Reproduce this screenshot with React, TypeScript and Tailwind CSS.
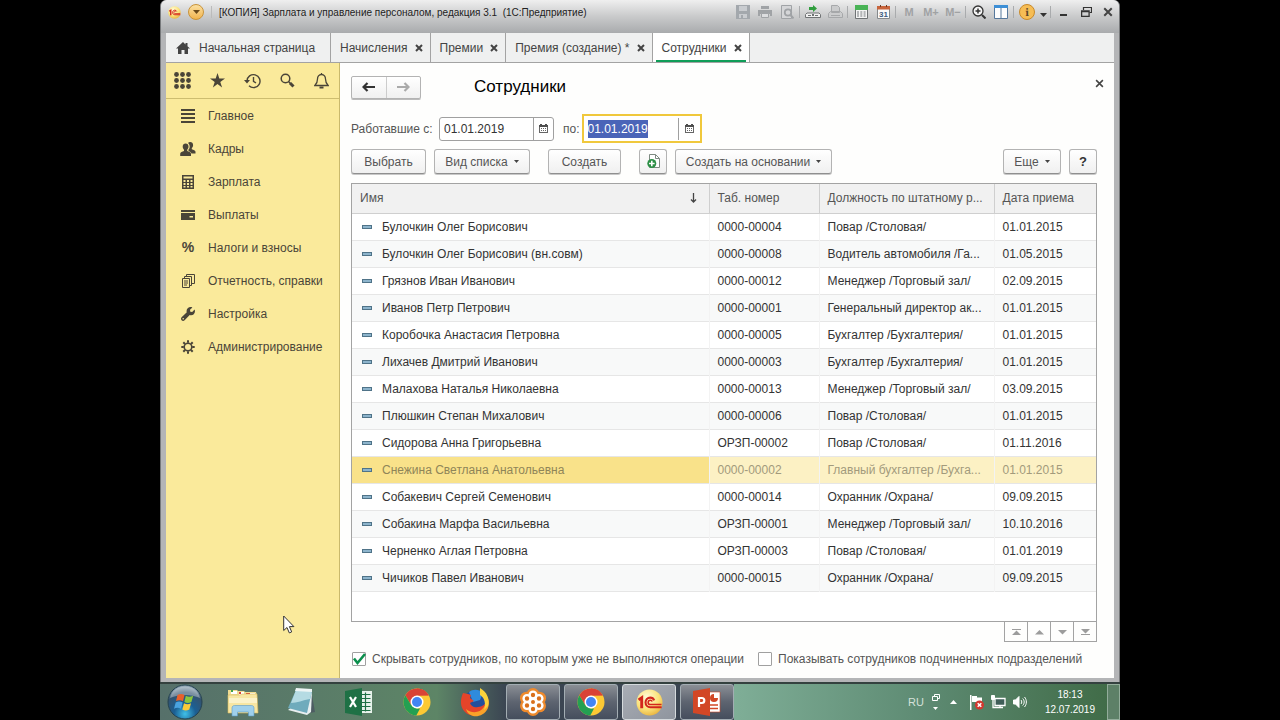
import { useEffect, useRef, useState, type ReactNode } from 'react'

const tabs = [
  { title: 'Начисления' },
  { title: 'Премии' },
  { title: 'Премия (создание) *' },
  { title: 'Сотрудники', active: true },
]

const employees = [
  ['Булочкин Олег Борисович', '0000-00004', 'Повар /Столовая/', '01.01.2015'],
  ['Булочкин Олег Борисович (вн.совм)', '0000-00008', 'Водитель автомобиля /Га...', '01.05.2015'],
  ['Грязнов Иван Иванович', '0000-00012', 'Менеджер /Торговый зал/', '02.09.2015'],
  ['Иванов Петр Петрович', '0000-00001', 'Генеральный директор ак...', '01.01.2015'],
  ['Коробочка Анастасия Петровна', '0000-00005', 'Бухгалтер /Бухгалтерия/', '01.01.2015'],
  ['Лихачев Дмитрий Иванович', '0000-00003', 'Бухгалтер /Бухгалтерия/', '01.01.2015'],
  ['Малахова Наталья Николаевна', '0000-00013', 'Менеджер /Торговый зал/', '03.09.2015'],
  ['Плюшкин Степан Михалович', '0000-00006', 'Повар /Столовая/', '01.01.2015'],
  ['Сидорова Анна Григорьевна', 'ОРЗП-00002', 'Повар /Столовая/', '01.11.2016'],
  ['Снежина Светлана Анатольевна', '0000-00002', 'Главный бухгалтер /Бухга...', '01.01.2015'],
  ['Собакевич Сергей Семенович', '0000-00014', 'Охранник /Охрана/', '09.09.2015'],
  ['Собакина Марфа Васильевна', 'ОРЗП-00001', 'Менеджер /Торговый зал/', '10.10.2016'],
  ['Черненко Аглая Петровна', 'ОРЗП-00003', 'Повар /Столовая/', '01.01.2019'],
  ['Чичиков Павел Иванович', '0000-00015', 'Охранник /Охрана/', '09.09.2015'],
]

/* ---------- Icons ---------- */

const MenuIcon = () => (
  <svg width="14" height="14" viewBox="0 0 14 14" fill="#4a4538">
    <path d="M0 0h14v2H0zM0 4h14v2H0zM0 8h14v2H0zM0 12h14v2H0z" />
  </svg>
)

const PeopleIcon = () => (
  <svg width="16" height="14" viewBox="0 0 16 14" fill="#4a4538">
    <path d="M10.200 0c1.700 0 2.900 1.200 2.900 3 0 1.300-.5 2.400-1.300 3v1.200c1.700.6 3.700 1.100 3.700 2.600v1.700h-4c-.4-1.400-1.600-2-3-2.600V7.600c.8-.8 1.200-2 1.200-3.200 0-1.400-.6-2.700-1.700-3.500C8.500.3 9.300 0 10.200 0z" />
    <path d="M5.600 1.600c1.800 0 2.900 1.200 2.900 3 0 1.400-.5 2.500-1.300 3.200V9c1.700.7 3.800 1.200 3.800 2.800V14H.2v-2.200C.2 10.200 2.300 9.700 4 9V7.800c-.8-.7-1.300-1.800-1.300-3.200 0-1.800 1.200-3 2.900-3z" />
  </svg>
)

const CalculatorIcon = () => (
  <svg width="12" height="14" viewBox="0 0 12 14">
    <path fill="#4a4538" fillRule="evenodd" d="M0 0h12v14H0zM1.500 1.500v2h9v-2zM1.500 5v2h2V5zM5 5v2h2V5zM8.500 5v2h2V5zM1.500 8v2h2V8zM5 8v2h2V8zM8.500 8v2h2V8zM1.500 11v1.500h2V11zM5 11v1.500h2V11zM8.500 11v1.500h2V11z" />
  </svg>
)

const CardIcon = () => (
  <svg width="14" height="10" viewBox="0 0 14 10" fill="#4a4538">
    <path d="M0 0h14v2H0z" />
    <path fillRule="evenodd" d="M0 3h14v7H0zM8.500 6v1.500H12V6z" />
  </svg>
)

const ReportIcon = () => (
  <svg width="13" height="14" viewBox="0 0 13 14" fill="none" stroke="#4a4538">
    <path d="M.5 4.500h7v9h-7zM2.500 4V2.500h7v9H8M4.500 2V.5h8v9H10" />
    <path d="M2 7h4M2 9h4M2 11h3" />
  </svg>
)

const WrenchIcon = () => (
  <svg width="14" height="14" viewBox="0 0 14 14" fill="#4a4538">
    <path d="M13.600 2.600 11.200 5 9.300 4.700 9 2.800 11.400.4C9.800-.3 8-.1 6.700 1.200 5.600 2.300 5.300 3.900 5.800 5.300L.6 10.300c-.8.8-.8 2.200 0 3s2.200.8 3 0l5.100-5.200c1.400.5 3 .2 4.100-.9 1.200-1.200 1.500-3 .8-4.600zM2.200 12.600a.8.8 0 1 1 0-1.600.8.8 0 0 1 0 1.600z" />
  </svg>
)

const GearIcon = () => (
  <svg width="14" height="14" viewBox="0 0 14 14" fill="none" stroke="#4a4538">
    <circle cx="7" cy="7" r="3.800" strokeWidth="1.600" />
    <path strokeWidth="2" d="M7 .3v2.500M7 11.200v2.500M.3 7h2.500M11.200 7h2.500M2.300 2.300l1.700 1.700M10 10l1.700 1.700M2.300 11.700 4 10M10 4l1.700-1.700" />
  </svg>
)

const sections: { title: string; icon: ReactNode }[] = [
  { title: 'Главное', icon: <MenuIcon /> },
  { title: 'Кадры', icon: <PeopleIcon /> },
  { title: 'Зарплата', icon: <CalculatorIcon /> },
  { title: 'Выплаты', icon: <CardIcon /> },
  { title: 'Налоги и взносы', icon: <span className="text-[14px] font-bold text-[#4a4538]">%</span> },
  { title: 'Отчетность, справки', icon: <ReportIcon /> },
  { title: 'Настройка', icon: <WrenchIcon /> },
  { title: 'Администрирование', icon: <GearIcon /> },
]

const CloseIcon = ({ size = 8, width = 2 }: { size?: number; width?: number }) => (
  <svg width={size} height={size} viewBox="0 0 8 8" stroke="#444" strokeWidth={width}>
    <path d="M1 1l6 6M7 1 1 7" />
  </svg>
)

const DateIcon = () => (
  <svg width="9" height="9" viewBox="0 0 9 9" shapeRendering="crispEdges">
    <path fill="#4f4f4f" d="M1 0h2v1h3V0h2v1h1v2H0V1h1z" />
    <path fill="none" stroke="#666" d="M.5 3v5.500h8V3" />
    <path fill="#666" d="M2 4h1v1H2zM4 4h1v1H4zM6 4h1v1H6zM2 6h1v1H2zM4 6h1v1H4zM6 6h1v1H6z" />
  </svg>
)

const Caret = () => (
  <svg width="5" height="3" viewBox="0 0 5 3" fill="#444">
    <path d="M0 0h5L2.500 3z" />
  </svg>
)

const Arrow = ({ color, flip }: { color: string; flip?: boolean }) => (
  <svg width="14" height="10" viewBox="0 0 14 10" className={flip ? 'rotate-180' : ''} fill="none" stroke={color} strokeWidth="2.200">
    <path d="M1.500 5H13M5.500 1l-4 4 4 4" />
  </svg>
)

const OneCIcon = ({ size }: { size: number }) => (
  <svg width={size} height={size} viewBox="0 0 26 26">
    <defs>
      <radialGradient id="oneC" cx=".4" cy=".3" r=".75">
        <stop offset="0" stopColor="#fffbd8" />
        <stop offset=".6" stopColor="#fbe27a" />
        <stop offset="1" stopColor="#e9b23c" />
      </radialGradient>
    </defs>
    <circle cx="13" cy="13" r="12.500" fill="url(#oneC)" />
    <g fill="none" stroke="#d3251c">
      <path strokeWidth="2.800" d="M2.500 10.500 5.500 8.500V18.500" />
      <path strokeWidth="2" d="M17.500 11c-.6-1.700-2-2.700-3.800-2.700-2.600 0-4.500 2-4.500 4.700 0 2.600 2 4.500 4.500 4.500h11" />
      <path strokeWidth="1.500" d="M15.600 12c-.3-.8-1-1.200-1.900-1.200-1.200 0-2 .9-2 2.200s.9 2 2.100 2h10.800" />
    </g>
  </svg>
)

const ChromeIcon = () => (
  <svg width="28" height="28" viewBox="0 0 28 28">
    <circle cx="14" cy="14" r="13.500" fill="#fcc934" />
    <path fill="#d94336" d="M2.300 7.200A13.500 13.500 0 0 1 25.700 7.300L14 7.500 8.300 17.300z" />
    <path fill="#24a052" d="M2.300 7.200 8.300 17.300 14 20.500h3L13.300 27.500A13.500 13.500 0 0 1 2.300 7.200z" />
    <path fill="#d94336" d="M14 7.500h11.800A13.500 13.500 0 0 0 14 .5z" />
    <circle cx="14" cy="14" r="6.500" fill="#fff" />
    <circle cx="14" cy="14" r="5" fill="#4285f4" />
  </svg>
)

const StartOrb = () => (
  <svg width="36" height="36" viewBox="0 0 36 36">
    <defs>
      <radialGradient id="orb" cx=".5" cy=".85" r=".9">
        <stop offset="0" stopColor="#3fc0e8" />
        <stop offset=".35" stopColor="#1b5f93" />
        <stop offset=".7" stopColor="#34536e" />
        <stop offset="1" stopColor="#b7cad4" />
      </radialGradient>
    </defs>
    <circle cx="18" cy="18" r="17" fill="url(#orb)" stroke="#24414f" />
    <path d="M3 14C5 6 11 2.500 18 2.500S31 6 33 14c-9-4-21-4-30 0z" fill="#fff" opacity=".35" />
    <path fill="#e8602c" d="M10.500 11c2.500-1.400 4.700-1.300 7 .1L16 17.300c-2.200-1.400-4.500-1.400-7-.2z" />
    <path fill="#8cc63e" d="M18.800 11.800c2.400 1.300 4.700 1.300 7.400 0l-1.800 6.200c-2.500 1.200-4.800 1.200-7 0z" />
    <path fill="#4aa3e0" d="M8.700 18.400c2.500-1.200 4.700-1.100 7 .2L14 24.800c-2.200-1.300-4.500-1.300-7-.1z" />
    <path fill="#fbcb3a" d="M17 19.300c2.300 1.300 4.600 1.300 7 0l-1.700 6.200c-2.500 1.300-4.700 1.200-7 0z" />
  </svg>
)

const ExplorerIcon = () => (
  <svg width="32" height="30" viewBox="0 0 32 30">
    <path fill="#f0dc93" d="M1 8V3h9l1 1h6l1 1h11l1 3z" />
    <path fill="#fff" d="M4 4h6v3H4zM12 5h5v3h-5zM19 6h9v2h-9z" />
    <path fill="#3fa24a" d="M4 3h2v2H4z" />
    <path fill="#d94336" d="M12 5h2v2h-2zM19 6h4v1h-4z" />
    <path fill="#f7e6a2" stroke="#d8b85a" strokeWidth=".6" d="M1 8h12l2-1h15l1 19H1z" />
    <path fill="#fbf2c9" d="M2 11h28v5H2z" />
    <path fill="#9fd0ec" stroke="#5a9bc8" strokeWidth=".6" d="M5 29v-8c0-1.500 1-2.500 2.500-2.500h17c1.500 0 2.500 1 2.500 2.500v8h-5.500v-4h-11v4z" />
  </svg>
)

const NotepadIcon = () => (
  <svg width="28" height="28" viewBox="0 0 28 28">
    <path fill="#4d5c62" d="M24 2l4 22-5 1z" />
    <path fill="#e8eff0" d="M1 22 20 27l4-3 1-20z" />
    <path fill="#6fabbc" d="M9 2 25 3 20 25 1 20z" />
    <path fill="#b5dbe3" d="M9 2 25 3 23 11C16 12 10 15 4 15z" />
    <path fill="#eef5f5" d="M9 0 25 1v3L8 3z" />
  </svg>
)

const ExcelIcon = () => (
  <svg width="28" height="28" viewBox="0 0 28 28">
    <path fill="#e8f3ec" d="M15 3h12v22H15z" />
    <path stroke="#1e7145" strokeWidth="1.200" d="M16 6.500h9.500M16 10.500h9.500M16 14.500h9.500M16 18.500h9.500M16 22.500h9.500M20.500 4.500v19" />
    <path fill="#1e7145" d="M0 3 17 0v28L0 25z" />
    <path fill="none" stroke="#fff" strokeWidth="2.200" d="M5 9l6 10M11 9 5 19" />
  </svg>
)

const FirefoxIcon = () => (
  <svg width="30" height="30" viewBox="0 0 30 30">
    <circle cx="15" cy="15.500" r="12" fill="#234f9c" />
    <path fill="#2f8bdc" d="M9 5c4-3 10-3 14 1l-3 7-7 2z" />
    <path fill="#e5442a" d="M3 6c-3 7-3 14 2 19 5 5 14 5 19 0 3-3 5-8 4-13-2 5-6 8-10 8-4 1-7-1-8-4l4-2-4-3 1-3-3-1z" />
    <path fill="#f9a229" d="M6 22c6 5 14 4 18-2 3-4 3-10 0-14 5 4 6 10 4 15-3 7-10 9-15 8-3-1-6-3-7-7z" />
    <path fill="#fbd23b" d="M20 1c7 4 10 11 8 18l-4 4c2-6 1-12-4-15z" />
  </svg>
)

const FlowerIcon = () => (
  <svg width="30" height="28" viewBox="0 0 30 28">
    <g fill="#ef8a2c">
      <circle cx="15" cy="14" r="11" />
      <circle cx="15" cy="6.500" r="6.500" />
      <circle cx="21.500" cy="10.200" r="6.500" />
      <circle cx="21.500" cy="17.800" r="6.500" />
      <circle cx="15" cy="21.500" r="6.500" />
      <circle cx="8.500" cy="17.800" r="6.500" />
      <circle cx="8.500" cy="10.200" r="6.500" />
    </g>
    <g fill="#d9701c" stroke="#fff" strokeWidth="2.400">
      <circle cx="15" cy="7" r="3.400" />
      <circle cx="21" cy="10.500" r="3.400" />
      <circle cx="21" cy="17.500" r="3.400" />
      <circle cx="15" cy="21" r="3.400" />
      <circle cx="9" cy="17.500" r="3.400" />
      <circle cx="9" cy="10.500" r="3.400" />
      <circle cx="15" cy="14" r="3.200" />
    </g>
  </svg>
)

const PowerPointIcon = () => (
  <svg width="28" height="28" viewBox="0 0 28 28">
    <path fill="#fff" stroke="#d24726" strokeWidth=".6" d="M15 4h12v20H15z" />
    <circle cx="21" cy="10" r="4" fill="#d24726" />
    <path fill="#fff" d="M21 10V6h4v4z" />
    <path stroke="#d24726" strokeWidth="1.500" d="M17 17h8M17 20.500h8" />
    <path fill="#d24726" d="M0 3 17 0v28L0 25z" />
    <path fill="none" stroke="#fff" strokeWidth="2.200" d="M6 19v-9h2.800a2.500 2.500 0 0 1 0 5H6" />
  </svg>
)

/* ---------- Window title bar ---------- */

const toolButton = 'flex h-4 w-[22px] items-center justify-center'
const Divider = () => <span className="mx-px h-3 w-0.5 border-l border-[#a9abad]" />

function TitleBar() {
  return (
    <header className="flex h-[33px] items-start justify-between rounded-t-md bg-linear-to-b from-[#efefef] via-[#c9cacb] via-50% to-[#a9abad] pt-1">
      <div className="flex h-4 items-center pl-[7px]">
        <OneCIcon size={13} />
        <button aria-label="Меню программы" className="ml-[7px] flex size-4 items-center justify-center rounded-full border border-[#c99339] bg-linear-to-b from-[#fbe0a0] to-[#f1b44c]">
          <svg width="7" height="4" viewBox="0 0 7 4" fill="#6b4a1a"><path d="M0 0h7L3.500 4z" /></svg>
        </button>
        <span className="mx-[7px] h-3 w-px bg-[#bbb]" />
        <h1 className="text-[10px] whitespace-nowrap text-[#222]">
          [КОПИЯ] Зарплата и управление персоналом, редакция 3.1&nbsp; (1С:Предприятие)
        </h1>
      </div>

      <div className="flex h-4 items-center">
        <button aria-label="Сохранить" className={toolButton}>
          <svg width="14" height="14" viewBox="0 0 14 14"><path fill="#a3a8ad" d="M0 0h14v14H0z" /><path fill="#c9ccd0" d="M3 1h8v5H3zM3 9h8v4H3z" /><path fill="#a3a8ad" d="M5 10h2v3H5z" /></svg>
        </button>
        <button aria-label="Печать" className={toolButton}>
          <svg width="14" height="14" viewBox="0 0 14 14"><path fill="#a0a3a6" d="M3 1h8v3H3zM0 5h14v6h-2V9H2v2H0z" /><path fill="#dcdddf" stroke="#a0a3a6" d="M3.500 8.500h7v4h-7z" /></svg>
        </button>
        <button aria-label="Предварительный просмотр" className={toolButton}>
          <svg width="14" height="14" viewBox="0 0 14 14" fill="none" stroke="#a0a3a6"><path fill="#d5d6d8" d="M1.500.5h10v13h-10z" /><circle cx="8" cy="7.500" r="3.200" strokeWidth="1.800" /><path strokeWidth="2" d="M10.500 10l3 3.500" /></svg>
        </button>
        <Divider />
        <button aria-label="Получить ссылку" className={toolButton}>
          <svg width="16" height="14" viewBox="0 0 16 14"><path fill="#2f9e3d" d="M4 2h4V0l4 3.500L8 7V5H4z" /><path fill="#f1f1f1" stroke="#707375" d="M.5 12.500V9.500L2 8h12l1.500 1.500v3z" /><path stroke="#707375" d="M3 10.500h3M10 10.500h3M7.500 9v2M8.500 9v2" /></svg>
        </button>
        <button aria-label="Перейти по ссылке" className={toolButton}>
          <svg width="15" height="14" viewBox="0 0 15 14"><path fill="#cbcccd" stroke="#a6a8aa" d="M3.500.5h6l2 2v5h-8zM.5 8.500l2-2h10l2 2v4H.5zM3 10.500h9" /></svg>
        </button>
        <Divider />
        <button aria-label="Калькулятор" className={toolButton}>
          <svg width="13" height="14" viewBox="0 0 13 14"><path fill="#f4f4f4" stroke="#6f7375" d="M.5.5h12v13H.5z" /><path fill="#49b356" d="M0 0h13v5H0z" /><path stroke="#75797c" strokeDasharray="2 1.300" d="M2 7h9M2 9h9M2 11h9" strokeWidth="1.200" /></svg>
        </button>
        <button aria-label="Календарь" className={toolButton}>
          <svg width="13" height="14" viewBox="0 0 13 14"><path fill="#fafafa" stroke="#85898c" d="M.5 1.500h12v12H.5z" /><path fill="#c8643c" d="M0 1h13v3.500H0z" /><path fill="#6b3a22" d="M3 0h1v2H3zM9 0h1v2H9z" /><text x="6.500" y="12" fontSize="8" fontWeight="700" textAnchor="middle" fill="#3d5c80">31</text></svg>
        </button>
        <Divider />
        <button className={`${toolButton} text-[11px] font-bold text-[#a0a2a4]`}>M</button>
        <button className={`${toolButton} text-[11px] font-bold text-[#a0a2a4]`}>M+</button>
        <button className={`${toolButton} text-[11px] font-bold text-[#a0a2a4]`}>M−</button>
        <Divider />
        <button aria-label="Масштаб" className={toolButton}>
          <svg width="14" height="14" viewBox="0 0 14 14" fill="none" stroke="#333"><circle cx="6" cy="6" r="5" fill="#f5f5f5" strokeWidth="1.300" /><path strokeWidth="1.500" d="M3.500 6h5M6 3.500v5" /><path strokeWidth="2" d="M10 10l3.500 3.500" /></svg>
        </button>
        <button aria-label="Панели" className={toolButton}>
          <svg width="14" height="14" viewBox="0 0 14 14"><path fill="#fdfdfd" stroke="#56789c" d="M.5.5h13v13H.5z" /><path fill="#3d8fd6" d="M0 0h14v3H0z" /><path stroke="#56789c" d="M7 3v11" /></svg>
        </button>
        <Divider />
        <button aria-label="О программе" className={toolButton}>
          <span className="flex size-4 items-center justify-center rounded-full border border-[#c98a2a] bg-[#f6bd55] font-serif text-[12px] leading-none font-bold text-[#5c4a2a]">i</span>
        </button>
        <svg width="7" height="4" viewBox="0 0 7 4" fill="#333" className="mx-0.5 mt-1.5"><path d="M0 0h7L3.500 4z" /></svg>
        <Divider />
        <button aria-label="Свернуть" className={toolButton}>
          <svg width="8" height="10" viewBox="0 0 8 10"><path fill="#333" d="M0 7h7v2H0z" /></svg>
        </button>
        <button aria-label="Развернуть" className={toolButton}>
          <svg width="11" height="10" viewBox="0 0 11 10" fill="none" stroke="#333"><path d="M2.500 3V.5h8v5H8.500" strokeWidth="1.200" /><path d="M.6 3.800h7.500v5.500H.6zM.6 4.500h7.500" strokeWidth="1.300" /></svg>
        </button>
        <button aria-label="Закрыть" className={toolButton}><CloseIcon size={10} width={1.6} /></button>
      </div>
    </header>
  )
}

function TabBar() {
  return (
    <nav className="flex h-[30px] border-b border-[#a3a3a3] bg-[#eff0f0] text-[12px] text-[#444]">
      <a href="#home" className="flex w-[165px] items-center border-r border-[#a3a3a3] pl-2.5">
        <svg width="14" height="12" viewBox="0 0 14 12" fill="#444"><path d="M7 0 0 6.500h2V12h3.500V8h3v4H12V6.500h2L11.500 4.200V1h-2v1.400z" /></svg>
        <span className="ml-[9px]">Начальная страница</span>
      </a>
      {tabs.map((tab) => (
        <div
          key={tab.title}
          className={`flex items-center border-r border-[#a3a3a3] px-[3px] ${tab.active ? 'bg-white' : ''}`}
        >
          <div className={`flex h-full items-center gap-[7px] pr-1 pl-1.5 ${tab.active ? 'border-b-2 border-[#0f9d58] pt-0.5' : ''}`}>
            <a href="#tab" className="whitespace-nowrap">{tab.title}</a>
            <button aria-label={`Закрыть ${tab.title}`}><CloseIcon /></button>
          </div>
        </div>
      ))}
    </nav>
  )
}

/* ---------- Left section panel ---------- */

function Sidebar() {
  return (
    <aside className="relative w-[174px] shrink-0 border-r border-[#c9b96c] bg-[#faea9b]">
      <div className="flex h-9 items-center justify-between border-b border-[#cdbd70] pr-2.5 pl-2">
        <button aria-label="Функции">
          <svg width="17" height="17" viewBox="0 0 17 17" fill="#4a4538">
            {[2.5, 8.5, 14.5].map((y) => [2.5, 8.5, 14.5].map((x) => <circle key={`${x}-${y}`} cx={x} cy={y} r="2.400" />))}
          </svg>
        </button>
        <button aria-label="Избранное">
          <svg width="15" height="15" viewBox="0 0 15 15" fill="#4a4538"><path d="M7.500 0 9.300 5.500H15l-4.700 3.400 1.800 5.600-4.600-3.500-4.600 3.500 1.800-5.600L0 5.500h5.700z" /></svg>
        </button>
        <button aria-label="История">
          <svg width="17" height="16" viewBox="0 0 17 16" fill="none" stroke="#4a4538" strokeWidth="1.400">
            <path d="M3 8a6.500 6.500 0 1 1 2 4.800M9.500 4v4.300l2.500 1.700" /><path fill="#4a4538" stroke="none" d="M0 7h6L3 10.500z" />
          </svg>
        </button>
        <button aria-label="Поиск">
          <svg width="15" height="15" viewBox="0 0 15 15" fill="none" stroke="#4a4538"><circle cx="5.500" cy="5.500" r="4.300" strokeWidth="1.500" /><path d="M8.500 8.500l2 2" strokeWidth="1.500" /><path d="M10 10l3.500 3.500" strokeWidth="3" /></svg>
        </button>
        <button aria-label="Оповещения">
          <svg width="15" height="16" viewBox="0 0 15 16" fill="none" stroke="#4a4538" strokeWidth="1.300"><path d="M7.500 1.500c-2.700 0-4 2-4 4.500 0 4-1.200 5-2.700 6.500h13.400C12.700 11 11.500 10 11.500 6c0-2.500-1.300-4.500-4-4.500zM7.500 0v2" /><path d="M5.500 14.500h4" strokeWidth="2" /></svg>
        </button>
      </div>
      <ul className="text-[12px] text-[#4a4538]">
        {sections.map((section) => (
          <li key={section.title}>
            <a href="#section" className="flex h-[33px] items-center pl-3.5">
              <span className="flex w-4 justify-center">{section.icon}</span>
              <span className="ml-3 whitespace-nowrap">{section.title}</span>
            </a>
          </li>
        ))}
      </ul>
      <svg width="12" height="19" viewBox="0 0 12 19" className="absolute bottom-11 left-[117px]">
        <path fill="#fff" stroke="#333" d="M.7 1v14.500l3.300-3 2.300 5.400 2.400-1-2.300-5.300h4.500z" />
      </svg>
    </aside>
  )
}

/* ---------- Employee list form ---------- */

const buttonClass =
  'flex h-[25px] items-center justify-center rounded-[3px] border border-[#b3b3b3] border-b-[#8f8f8f] bg-linear-to-b from-white to-[#f0f0f0] whitespace-nowrap shadow-[0_1px_0_#c8c8c8]'

function FormHeader() {
  return (
    <div className="flex items-center pt-3">
      <div className="flex h-[23px] w-[70px] rounded-[2px] border border-[#b3b3b3] bg-linear-to-b from-white to-[#f0f0f0] shadow-[0_1px_0_#bbb]">
        <button aria-label="Назад" className="flex flex-1 items-center justify-center border-r border-[#ccc]"><Arrow color="#333" /></button>
        <button aria-label="Вперед" className="flex flex-1 items-center justify-center"><Arrow color="#aaa" flip /></button>
      </div>
      <h2 className="ml-[53px] text-[17px] leading-6 text-black">Сотрудники</h2>
      <button aria-label="Закрыть форму" className="-mr-[7px] mb-2 ml-auto"><CloseIcon size={9} width={1.4} /></button>
    </div>
  )
}

function Filters() {
  const toRef = useRef<HTMLInputElement>(null)

  useEffect(() => {
    toRef.current?.focus()
    toRef.current?.select()
  }, [])

  return (
    <div className="mt-[15px] flex h-[29px] items-center">
      <label htmlFor="from" className="w-[88px] whitespace-nowrap">Работавшие с:</label>
      <div className="flex h-6 w-[115px] rounded-[3px] border border-[#a0a0a0] bg-white">
        <input id="from" defaultValue="01.01.2019" className="min-w-0 flex-1 pl-1 text-[#333] outline-none" />
        <button aria-label="Выбрать дату начала" className="flex w-5 items-center justify-center border-l border-[#a0a0a0]"><DateIcon /></button>
      </div>
      <label htmlFor="to" className="mr-0.5 ml-[9px]">по:</label>
      <div className="flex h-[29px] w-[120px] items-center border-2 border-[#f0c83c] bg-white">
        <input
          id="to"
          ref={toRef}
          defaultValue="01.01.2019"
          className="min-w-0 flex-1 pl-1 text-[#333] outline-none selection:bg-[#4a64b8] selection:text-white"
        />
        <button aria-label="Выбрать дату окончания" className="flex h-[22px] w-[22px] items-center justify-center border-l border-[#a0a0a0]"><DateIcon /></button>
      </div>
    </div>
  )
}

function CommandBar() {
  return (
    <div className="mt-1.5 flex items-center">
      <button className={`${buttonClass} w-[75px]`}>Выбрать</button>
      <button className={`${buttonClass} ml-2 w-24 gap-1.5`}>Вид списка <Caret /></button>
      <button className={`${buttonClass} ml-[18px] w-[73px]`}>Создать</button>
      <button aria-label="Создать копированием" className={`${buttonClass} ml-[18px] w-7`}>
        <svg width="13" height="15" viewBox="0 0 13 15"><path fill="#fff" stroke="#7e8a82" d="M2.500.5h6l4 4v9h-10z" /><path fill="none" stroke="#7e8a82" d="M8.500.5v4h4" /><circle cx="4.800" cy="9.500" r="4.500" fill="#2b8f45" /><path stroke="#fff" strokeWidth="1.600" d="M2 9.500h5.600M4.800 6.700v5.600" /></svg>
      </button>
      <button className={`${buttonClass} ml-2 w-[157px] gap-1.5`}>Создать на основании <Caret /></button>
      <button className={`${buttonClass} ml-auto w-[58px] gap-1.5`}>Еще <Caret /></button>
      <button aria-label="Справка" className={`${buttonClass} ml-2 w-7 text-[13px] font-bold text-[#333]`}>?</button>
    </div>
  )
}

function EmployeeTable() {
  const [selected, setSelected] = useState(9)

  return (
    <div className="mt-[9px] flex flex-1 flex-col border border-[#a3a3a3] bg-white">
      <table className="w-full table-fixed border-collapse text-left">
        <thead className="bg-[#f1f1f1] text-[#555]">
          <tr className="h-[29px] border-b border-[#cfcfcf]">
            <th className="pl-2 font-normal">
              <div className="flex items-center justify-between pr-3">
                Имя
                <svg width="7" height="10" viewBox="0 0 7 10" fill="none" stroke="#444" strokeWidth="1.300"><path d="M3.500 0v9M1 6.500 3.500 9 6 6.500" /></svg>
              </div>
            </th>
            <th className="w-[110px] border-l border-[#cfcfcf] pl-2 font-normal">Таб. номер</th>
            <th className="w-[175px] border-l border-[#cfcfcf] pl-2 font-normal whitespace-nowrap">Должность по штатному р...</th>
            <th className="w-[102px] border-l border-[#cfcfcf] pl-2 font-normal">Дата приема</th>
          </tr>
        </thead>
        <tbody>
          {employees.map(([name, number, position, date], index) => {
            const active = index === selected
            return (
              <tr
                key={number}
                onClick={() => setSelected(index)}
                className={`h-[27px] border-b border-[#e6e6e6] ${active ? 'bg-[#fcf1c4] text-[#a29a7c]' : 'text-[#333] even:bg-[#f8f9f9]'}`}
              >
                <td className={`pl-2.5 ${active ? 'bg-[#f9e28a] text-[#8f8558]' : ''}`}>
                  <div className="flex items-center gap-2.5 whitespace-nowrap">
                    <span className="h-1 w-2.5 border border-[#4f7388] bg-[#8db4cc]" />
                    {name}
                  </div>
                </td>
                <td className="border-l border-[#f3f3f3] pl-2">{number}</td>
                <td className="border-l border-[#f3f3f3] pl-2 whitespace-nowrap">{position}</td>
                <td className="border-l border-[#f3f3f3] pl-2">{date}</td>
              </tr>
            )
          })}
        </tbody>
      </table>
    </div>
  )
}

const pagerIcons = [
  { label: 'В начало', path: 'M0 0h9v1H0zM4.500 1.500 9 6H0z' },
  { label: 'Вверх', path: 'M4.500 1 9 5.500H0z' },
  { label: 'Вниз', path: 'M0 1h9L4.500 5.500z' },
  { label: 'В конец', path: 'M0 0h9L4.500 4.500zM0 5h9v1H0z' },
]

function CheckBox({ label, checked }: { label: string; checked?: boolean }) {
  return (
    <label className="flex items-center gap-1.5 whitespace-nowrap">
      <span className="grid size-[15px] place-items-center">
        <input type="checkbox" defaultChecked={checked} className="peer col-start-1 row-start-1 size-3.5 appearance-none rounded-[1px] border border-[#a0a0a0] bg-white" />
        <svg width="14" height="13" viewBox="0 0 14 13" className="pointer-events-none invisible col-start-1 row-start-1 peer-checked:visible" fill="none" stroke="#0b8f4c" strokeWidth="2.600">
          <path d="M2 5.500 5.500 10 13 1" />
        </svg>
      </span>
      {label}
    </label>
  )
}

function EmployeesForm() {
  return (
    <main className="flex min-w-0 flex-1 flex-col bg-[#fefefd] pr-[17px] pl-[11px] text-[12px] text-[#555]">
      <FormHeader />
      <Filters />
      <CommandBar />
      <EmployeeTable />
      <div className="ml-auto flex border-l border-[#a3a3a3]">
        {pagerIcons.map((icon) => (
          <button key={icon.label} aria-label={icon.label} className="flex h-5 w-[23px] items-center justify-center border-r border-b border-[#a3a3a3]">
            <svg width="9" height="6" viewBox="0 0 9 6" fill="#9c9c9c"><path d={icon.path} /></svg>
          </button>
        ))}
      </div>
      <div className="mt-2 mb-2.5 flex items-center gap-[13px]">
        <CheckBox label="Скрывать сотрудников, по которым уже не выполняются операции" checked />
        <CheckBox label="Показывать сотрудников подчиненных подразделений" />
      </div>
    </main>
  )
}

/* ---------- Desktop taskbar ---------- */

const taskbarApps: { title: string; icon: ReactNode; active?: boolean }[] = [
  { title: 'Проводник', icon: <ExplorerIcon /> },
  { title: 'Блокнот', icon: <NotepadIcon /> },
  { title: 'Excel', icon: <ExcelIcon /> },
  { title: 'Chrome', icon: <ChromeIcon /> },
  { title: 'Firefox', icon: <FirefoxIcon /> },
]

const runningApps: typeof taskbarApps = [
  { title: 'Вебинар', icon: <FlowerIcon /> },
  { title: 'Chrome, окно', icon: <ChromeIcon /> },
  { title: '1С:Предприятие', icon: <OneCIcon size={27} />, active: true },
  { title: 'PowerPoint', icon: <PowerPointIcon /> },
]

function Taskbar() {
  return (
    <footer className="flex h-[38px] items-center border-t-2 border-[#34413f] bg-[#3b4552]">
      <div className="flex h-full items-center bg-linear-to-r from-[#56706a] via-[#5d8566] via-80% to-[#3b4552]">
        <button aria-label="Пуск" className="ml-[7px]"><StartOrb /></button>
        <div className="ml-[13px] flex gap-1 pr-1">
          {taskbarApps.map((app) => (
            <button key={app.title} aria-label={app.title} className="flex h-9 w-[54px] items-center justify-center">
              {app.icon}
            </button>
          ))}
        </div>
      </div>
      <div className="flex gap-1">
        {runningApps.map((app) => (
          <button
            key={app.title}
            aria-label={app.title}
            className={`flex h-9 w-[54px] items-center justify-center rounded-[3px] border ${
              app.active
                ? 'border-[#d5dadd] bg-linear-to-br from-[#a9adb5] to-[#8f959e]'
                : 'border-[#a3adb3] bg-linear-to-b from-[#8b8f95] via-[#5d6470] to-[#454e5d]'
            }`}
          >
            {app.icon}
          </button>
        ))}
      </div>
      <div className="flex h-full flex-1 items-center justify-end bg-linear-to-r from-[#7fae97] via-[#5d8a72] via-50% to-[#3f6a45]">
        <span className="text-[11px] text-[#d5e0d9]">RU</span>
        <div className="ml-2 flex flex-col items-center gap-1.5">
          <svg width="8" height="7" viewBox="0 0 8 7" fill="none" stroke="#fff"><path d="M2.500 2V.5h5v4H6M.5 2.500h5v4h-5z" /></svg>
          <svg width="5" height="3" viewBox="0 0 5 3" fill="#fff"><path d="M0 0h5L2.500 3z" /></svg>
        </div>
        <button aria-label="Скрытые значки" className="mr-3 ml-2.5">
          <svg width="7" height="4" viewBox="0 0 7 4" fill="#fff"><path d="M3.500 0 7 4H0z" /></svg>
        </button>
        <div className="flex items-center gap-[7px]">
          <svg width="15" height="15" viewBox="0 0 15 15"><path fill="#fff" d="M1 0h1.500v15H1zM3 1h5v1.500h5V8H8V7H3z" /><circle cx="10.500" cy="10" r="4.500" fill="#d3382f" /><path stroke="#fff" strokeWidth="1.500" d="M8.700 8.200l3.600 3.600M12.300 8.200l-3.600 3.600" /></svg>
          <svg width="15" height="14" viewBox="0 0 15 14" fill="none" stroke="#fff"><path fill="#3f5e58" strokeWidth="1.300" d="M4 3.500h10v7H4z" /><path fill="#fff" d="M.5.5h3v4h-3z" /><path d="M2 5v7.500h10M9 11v2" strokeWidth="1.300" /></svg>
          <svg width="14" height="14" viewBox="0 0 14 14" fill="none" stroke="#fff"><path fill="#fff" d="M.5 5h2L6 1.500v11L2.500 9h-2z" /><path d="M8 5c1 1 1 3 0 4M9.700 3.500c2 2 2 5 0 7M11.500 2c2.500 3 2.500 7 0 10" /></svg>
        </div>
        <div className="ml-[18px] text-center text-[10px] leading-[15px] text-white">
          <div>18:13</div>
          <div>12.07.2019</div>
        </div>
        <button aria-label="Показать рабочий стол" className="ml-3 h-full w-[13px] border border-[#93ad9b] bg-[#5d8067]" />
      </div>
    </footer>
  )
}

export default function App() {
  return (
    <div className="min-h-screen bg-black font-['Liberation_Sans',Arial,sans-serif]">
      <div className="mx-auto flex min-h-screen w-3/4 flex-col">
        <div className="flex flex-1 flex-col rounded-t-md border-x border-[#77797b] bg-[#b4b5b7]">
          <TitleBar />
          <div className="mx-[5px] mb-1 flex flex-1 flex-col">
            <TabBar />
            <div className="flex flex-1">
              <Sidebar />
              <EmployeesForm />
            </div>
          </div>
        </div>
        <Taskbar />
      </div>
    </div>
  )
}
